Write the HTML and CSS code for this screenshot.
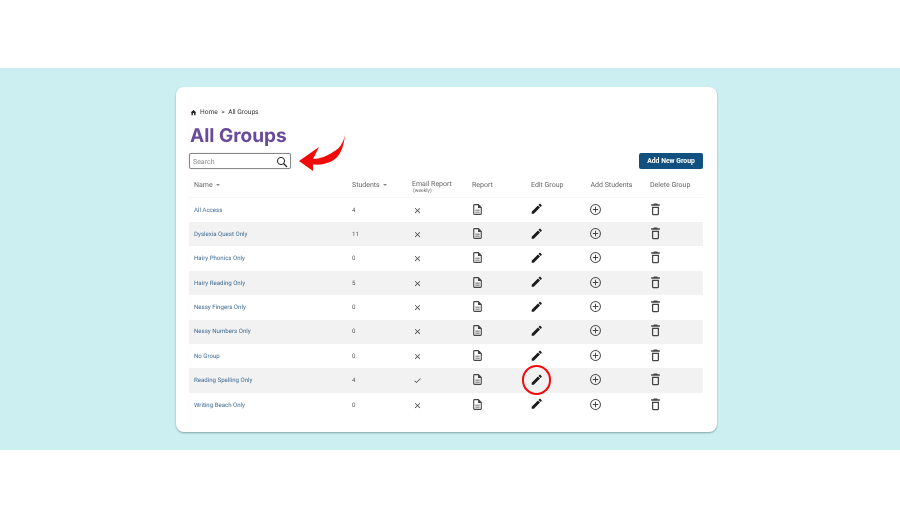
FILE: index.html
```html
<!DOCTYPE html>
<html lang="en">
<head>
    <meta charset="UTF-8">
    <meta name="viewport" content="width=device-width, initial-scale=1.0">
    <title>All Groups</title>
    <link rel="stylesheet" href="styles.css">
</head>
<body>
    <svg class="icon-defs" width="0" height="0">
        <symbol id="doc" viewBox="0 0 24 24"><path d="M14 2H6.5A2.5 2.5 0 0 0 4 4.5v15A2.5 2.5 0 0 0 6.5 22h11a2.500 2.500 0 0 0 2.500-2.500V8l-6-6zm4 17.500a.5.5 0 0 1-.5.5h-11a.5.5 0 0 1-.5-.5v-15a.5.5 0 0 1 .5-.5H13v5h5v10.500zM8 12.300h8v1.700H8zm0 3.700h8v1.700H8z"/></symbol>
        <symbol id="pencil" viewBox="0 0 24 24"><path d="M3 17.250V21h3.750L17.810 9.940l-3.750-3.750L3 17.250zM20.710 7.040a1 1 0 0 0 0-1.410l-2.340-2.340a1 1 0 0 0-1.410 0l-1.830 1.830 3.750 3.750 1.830-1.830z"/></symbol>
        <symbol id="plus" viewBox="0 0 24 24"><path d="M12 2a10 10 0 1 0 0 20 10 10 0 0 0 0-20zm0 18.200a8.200 8.200 0 1 1 0-16.400 8.200 8.200 0 0 1 0 16.400zM12.900 7h-1.800v4.100H7v1.800h4.100V17h1.800v-4.100H17v-1.800h-4.100z"/></symbol>
        <symbol id="trash" viewBox="0 0 24 24"><path d="M9 1h6l1 1.500h4v2.500H4V2.500h4L9 1zM5.500 7h13v13.500a2 2 0 0 1-2 2h-9a2 2 0 0 1-2-2V7zm2.300 2.200v11h8.400v-11H7.800z"/></symbol>
        <symbol id="cross" viewBox="0 0 24 24"><path d="M19 6.400 17.600 5 12 10.600 6.400 5 5 6.400 10.600 12 5 17.600 6.400 19 12 13.400 17.600 19 19 17.600 13.400 12z"/></symbol>
        <symbol id="tick" viewBox="0 0 24 24"><path d="M9 16.200 4.800 12l-1.300 1.300L9 18.800 20.800 7l-1.300-1.300z"/></symbol>
    </svg>

    <div class="band">
        <div class="card">
            <div class="crumbs">
                <svg class="home" viewBox="0 0 24 24"><path d="M10 21v-7h4v7h5v-9h3L12 3 2 12h3v9z"/></svg>
                <span>Home</span>
                <span class="sep">&gt;</span>
                <span>All Groups</span>
            </div>
            <h1>All Groups</h1>
            <div class="toolbar">
                <div class="search">
                    <span>Search</span>
                    <svg viewBox="0 0 24 24"><circle cx="10" cy="10" r="7.200" fill="none" stroke="#222" stroke-width="2"/><path d="m15.500 15.500 6.500 6.500" stroke="#222" stroke-width="2.600"/></svg>
                </div>
                <button class="btn">Add New Group</button>
            </div>

            <div class="row head">
                <div>Name <i class="caret"></i></div>
                <div>Students <i class="caret"></i></div>
                <div class="email">Email Report<small>(weekly)</small></div>
                <div>Report</div>
                <div>Edit Group</div>
                <div>Add Students</div>
                <div>Delete Group</div>
            </div>

            <div class="row"><a>All Access</a><div>4</div><svg class="mark"><use href="#cross"/></svg><svg class="ico doc"><use href="#doc"/></svg><svg class="ico pen"><use href="#pencil"/></svg><svg class="ico"><use href="#plus"/></svg><svg class="ico"><use href="#trash"/></svg></div>
            <div class="row"><a>Dyslexia Quest Only</a><div>11</div><svg class="mark"><use href="#cross"/></svg><svg class="ico doc"><use href="#doc"/></svg><svg class="ico pen"><use href="#pencil"/></svg><svg class="ico"><use href="#plus"/></svg><svg class="ico"><use href="#trash"/></svg></div>
            <div class="row"><a>Hairy Phonics Only</a><div>0</div><svg class="mark"><use href="#cross"/></svg><svg class="ico doc"><use href="#doc"/></svg><svg class="ico pen"><use href="#pencil"/></svg><svg class="ico"><use href="#plus"/></svg><svg class="ico"><use href="#trash"/></svg></div>
            <div class="row"><a>Hairy Reading Only</a><div>5</div><svg class="mark"><use href="#cross"/></svg><svg class="ico doc"><use href="#doc"/></svg><svg class="ico pen"><use href="#pencil"/></svg><svg class="ico"><use href="#plus"/></svg><svg class="ico"><use href="#trash"/></svg></div>
            <div class="row"><a>Nessy Fingers Only</a><div>0</div><svg class="mark"><use href="#cross"/></svg><svg class="ico doc"><use href="#doc"/></svg><svg class="ico pen"><use href="#pencil"/></svg><svg class="ico"><use href="#plus"/></svg><svg class="ico"><use href="#trash"/></svg></div>
            <div class="row"><a>Nessy Numbers Only</a><div>0</div><svg class="mark"><use href="#cross"/></svg><svg class="ico doc"><use href="#doc"/></svg><svg class="ico pen"><use href="#pencil"/></svg><svg class="ico"><use href="#plus"/></svg><svg class="ico"><use href="#trash"/></svg></div>
            <div class="row"><a>No Group</a><div>0</div><svg class="mark"><use href="#cross"/></svg><svg class="ico doc"><use href="#doc"/></svg><svg class="ico pen"><use href="#pencil"/></svg><svg class="ico"><use href="#plus"/></svg><svg class="ico"><use href="#trash"/></svg></div>
            <div class="row"><a>Reading Spelling Only</a><div>4</div><svg class="mark"><use href="#tick"/></svg><svg class="ico doc"><use href="#doc"/></svg><svg class="ico pen"><use href="#pencil"/></svg><svg class="ico"><use href="#plus"/></svg><svg class="ico"><use href="#trash"/></svg></div>
            <div class="row"><a>Writing Beach Only</a><div>0</div><svg class="mark"><use href="#cross"/></svg><svg class="ico doc"><use href="#doc"/></svg><svg class="ico pen"><use href="#pencil"/></svg><svg class="ico"><use href="#plus"/></svg><svg class="ico"><use href="#trash"/></svg></div>

            <!-- annotations drawn over the screenshot -->
            <svg class="arrow" viewBox="0 0 47 37"><path d="M46 0C44 9 40 14 34 17C28 21 21 24 14 24L20 12L0 26L14 36L14 29.500C21 30 26 29 31 27C38 24 44 18 46 0Z" fill="#f00a0a"/></svg>
            <div class="ring"></div>
        </div>
    </div>
</body>
</html>
```

FILE: styles.css
```css
* {
    box-sizing: border-box;
}
html, body {
    margin: 0;
    height: 506px;
    overflow: hidden;
    background: white;
    font-family: Roboto, "Liberation Sans", sans-serif;
    text-rendering: geometricPrecision;
}
.icon-defs {
    position: absolute;
}
.band {
    margin-top: 68px;
    height: 382px;
    padding: 19px 183px 0 176px;
    background-color: #ccf0f2;
}
.card {
    position: relative;
    height: 345px;
    padding: 19px 14px 0 13px;
    background: white;
    border-radius: 8px;
    box-shadow: 0 1px 2px rgba(60, 90, 90, 0.5);
    will-change: transform;
}
.crumbs {
    display: flex;
    align-items: center;
    gap: 3px;
    height: 12px;
    margin-left: 1px;
    font-size: 6.600px;
    color: #333;
}
.home {
    width: 7px;
    height: 7px;
    fill: #222;
}
.sep {
    margin: 0 0.500px;
}
h1 {
    margin: 3px 0 0 1px;
    height: 29px;
    font-family: Inter, sans-serif;
    font-size: 19px;
    font-weight: 700;
    line-height: 29px;
    color: #6a4a9c;
}
.toolbar {
    display: flex;
    justify-content: space-between;
    align-items: center;
    margin-top: 3px;
}
.search {
    display: flex;
    justify-content: space-between;
    align-items: center;
    width: 102px;
    height: 16px;
    padding: 1px 2px 0 3px;
    border: 1px solid #888;
    border-radius: 2px;
    font-size: 7px;
    color: #888;
    box-shadow: 0 0 1px #999;
}
.search svg {
    width: 12px;
    height: 12px;
}
.btn {
    width: 64px;
    height: 16px;
    padding: 0;
    border: none;
    border-radius: 2px;
    background-color: #11507f;
    color: white;
    font-family: inherit;
    font-size: 6.800px;
    font-weight: 700;
}
.row {
    display: grid;
    grid-template-columns: 158px 60px 60px 59px 59.500px 59.500px 1fr;
    align-items: center;
    height: 24.400px;
    padding-top: 0.500px;
    font-size: 6.100px;
    color: #555;
}
.row:nth-child(even) {
    background-color: #f2f2f2;
}
.row > a, .row > div {
    padding-left: 5px;
}
.row > a {
    color: #3f6b94;
}
.row.head {
    align-items: start;
    height: 22.600px;
    margin-top: 6px;
    padding-top: 5.500px;
    font-size: 7px;
    color: #666;
    background: none;
    border-bottom: 1px solid #f6f6f6;
}
.email {
    line-height: 7px;
}
.email small {
    display: block;
    padding-left: 1px;
    font-size: 5px;
}
.caret {
    display: inline-block;
    margin-left: 2px;
    vertical-align: middle;
    border-left: 2px solid transparent;
    border-right: 2px solid transparent;
    border-top: 2px solid #888;
}
.mark {
    width: 9px;
    height: 9px;
    margin-left: 6px;
    fill: #444;
}
.ico {
    width: 13px;
    height: 13px;
    margin-left: 3.500px;
    margin-bottom: 2px;
    fill: #444;
}
.pen {
    width: 13.500px;
    height: 13.500px;
    fill: #1c1c1c;
}
.arrow {
    position: absolute;
    left: 123px;
    top: 48px;
    width: 47px;
    height: 37px;
}
.ring {
    position: absolute;
    left: 345.500px;
    top: 278px;
    width: 29.500px;
    height: 29.500px;
    border: 2px solid #f00a0a;
    border-radius: 50%;
}
```
